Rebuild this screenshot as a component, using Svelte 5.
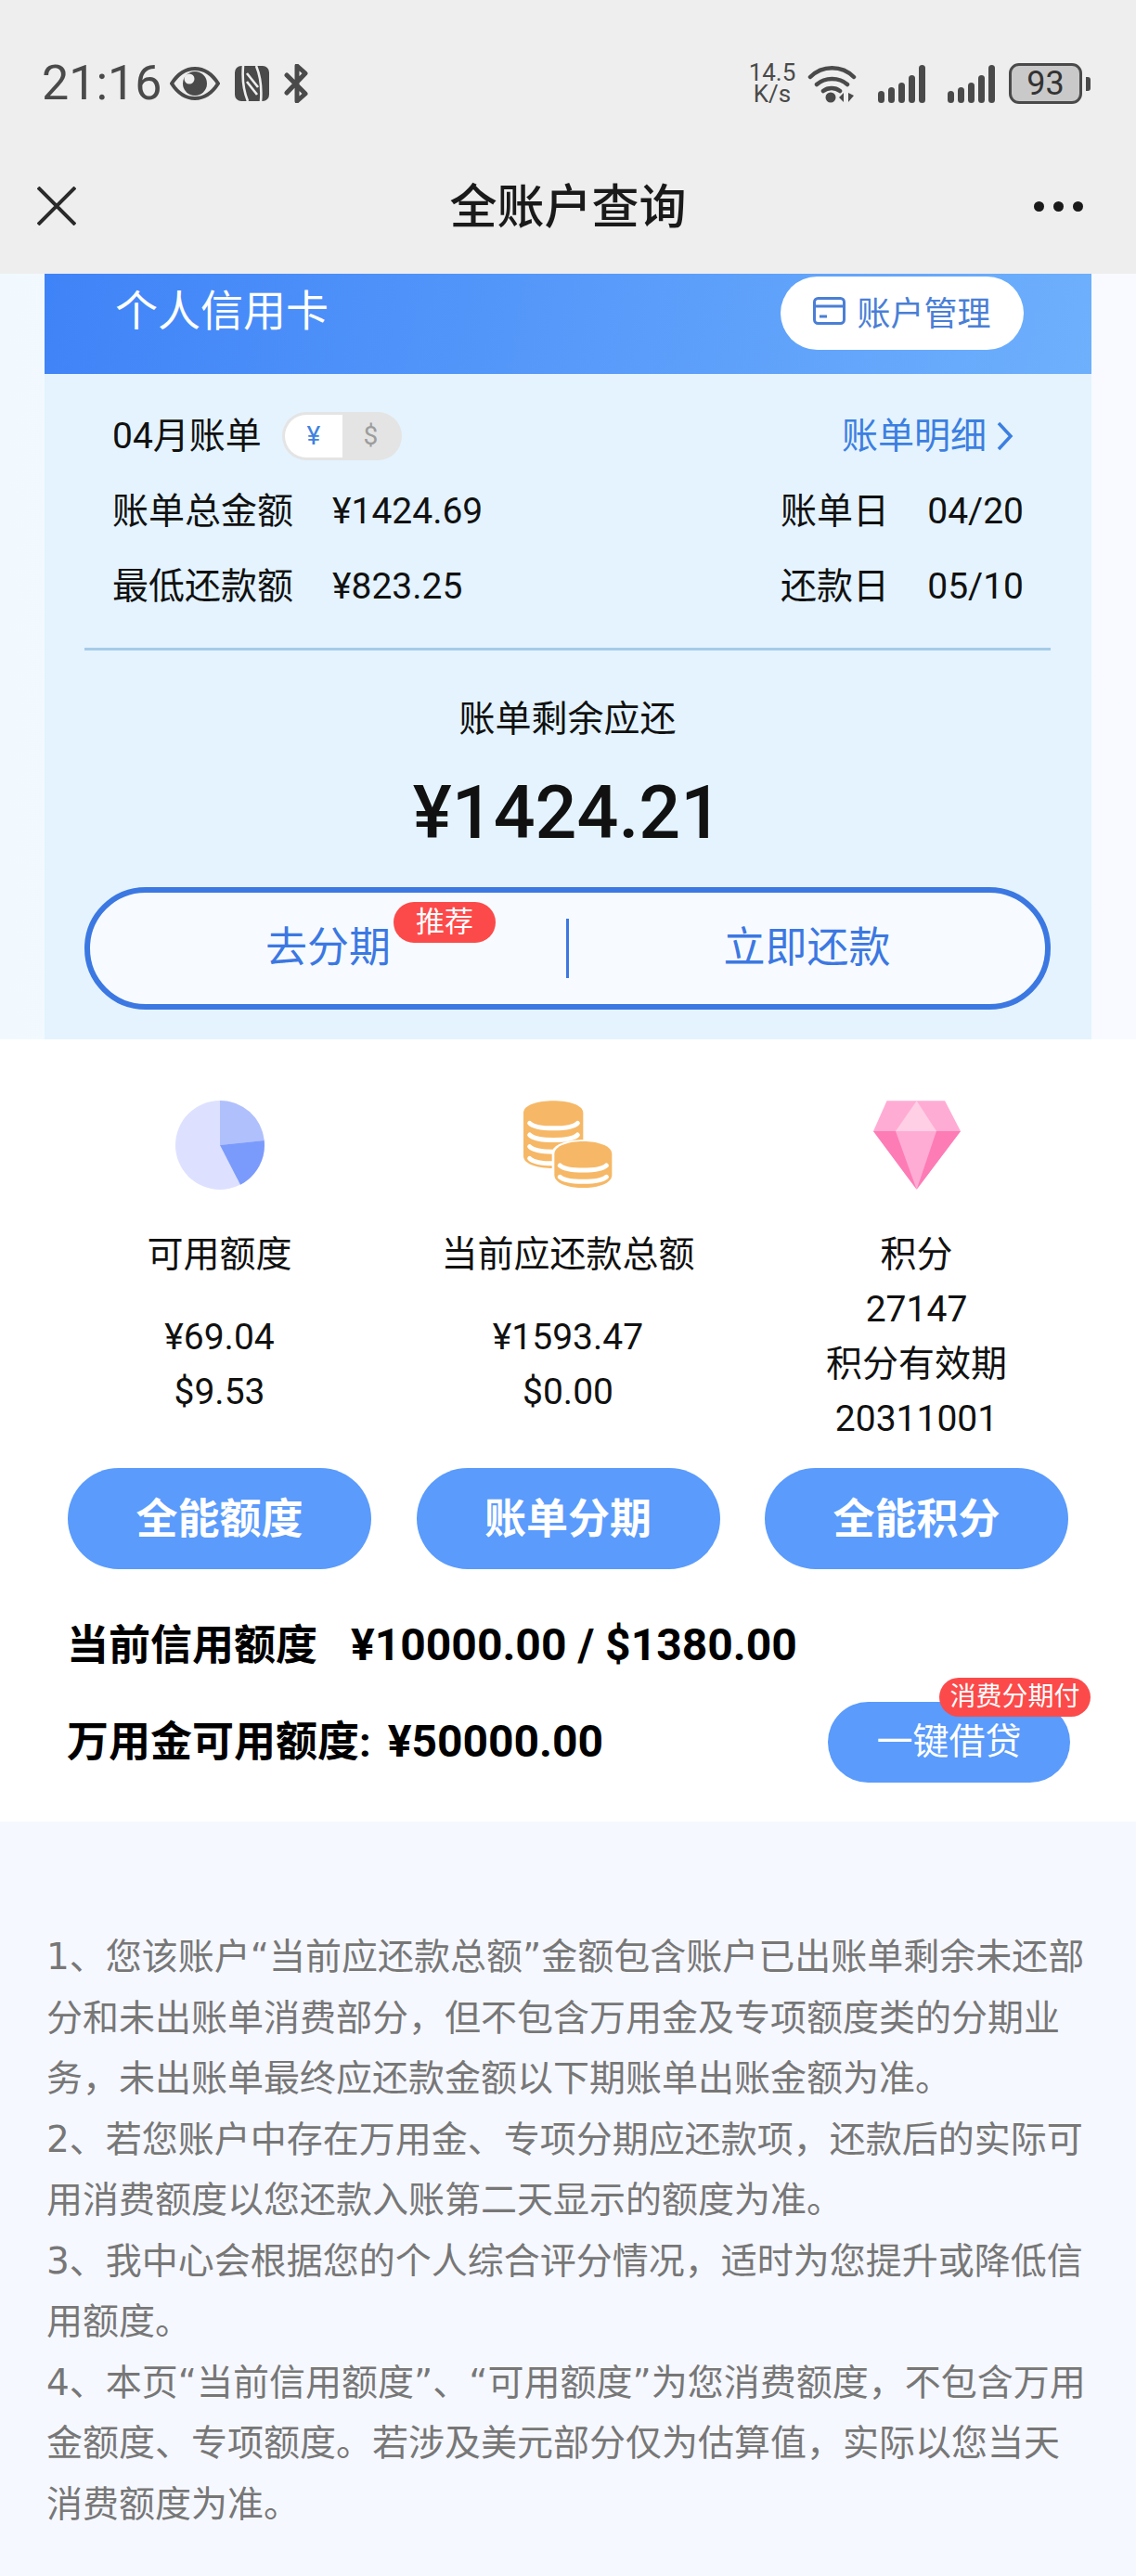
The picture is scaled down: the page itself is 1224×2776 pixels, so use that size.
<script>
  const stats = [
    { label: '可用额度', lines: ['¥69.04', '$9.53'], icon: 'pie', action: '全能额度' },
    { label: '当前应还款总额', lines: ['¥1593.47', '$0.00'], icon: 'coins', action: '账单分期' },
    { label: '积分', lines: ['27147', '积分有效期', '20311001'], icon: 'gem', action: '全能积分' }
  ];

  const notes = [
    '1、您该账户“当前应还款总额”金额包含账户已出账单剩余未还部分和未出账单消费部分，但不包含万用金及专项额度类的分期业务，未出账单最终应还款金额以下期账单出账金额为准。',
    '2、若您账户中存在万用金、专项分期应还款项，还款后的实际可用消费额度以您还款入账第二天显示的额度为准。',
    '3、我中心会根据您的个人综合评分情况，适时为您提升或降低信用额度。',
    '4、本页“当前信用额度”、“可用额度”为您消费额度，不包含万用金额度、专项额度。若涉及美元部分仅为估算值，实际以您当天消费额度为准。'
  ];
</script>

<div class="page">
  <header class="top">
    <div class="status">
      <div class="status-left">
        <span class="time">21:16</span>
        <svg class="eye" viewBox="0 0 54 36" width="54" height="36">
          <path d="M2 18C9 7 18 2 27 2s18 5 25 16c-7 11-16 16-25 16S9 29 2 18Z" fill="none" stroke="#4a4a4a" stroke-width="4" />
          <circle cx="27" cy="18" r="13" fill="#4a4a4a" />
          <circle cx="21" cy="13" r="5.5" fill="#eee" />
        </svg>
        <svg class="nfc" viewBox="0 0 37 38" width="37" height="38">
          <rect width="37" height="38" rx="7" fill="#4a4a4a" />
          <path d="M9 0c-1 12 0 26 5 38M28 38c1-12 0-26-5-38M13 8l12 15M13 17l11 14" fill="none" stroke="#eee" stroke-width="2.6" />
        </svg>
        <svg class="bt" viewBox="0 0 26 42" width="26" height="42">
          <path d="M3 12l20 20-9 8V2l9 8L3 31" fill="none" stroke="#4a4a4a" stroke-width="5" stroke-linejoin="round" stroke-linecap="round" />
        </svg>
      </div>
      <div class="status-right">
        <div class="speed"><span>14.5</span><span>K/s</span></div>
        <svg viewBox="0 0 53 42" width="53" height="42">
          <path d="M3 14C16 1 37 1 50 14M10 22c9-8 24-8 33 0M17 29c5-4 13-4 18 0" fill="none" stroke="#4a4a4a" stroke-width="4.5" stroke-linecap="round" />
          <circle cx="25" cy="36" r="5.5" fill="#4a4a4a" />
          <path d="M39 31v10l-5-5ZM44 31v10l6-7Z" fill="#4a4a4a" />
        </svg>
        <svg class="signal" viewBox="0 0 52 41" width="52" height="41">
          <rect x="0" y="28" width="7" height="13" rx="3.5" />
          <rect x="11" y="24" width="7" height="17" rx="3.5" />
          <rect x="22" y="19" width="7" height="22" rx="3.5" />
          <rect x="33" y="11" width="7" height="30" rx="3.5" />
          <rect x="44" y="0" width="7" height="41" rx="3.5" />
        </svg>
        <svg class="signal" viewBox="0 0 52 41" width="52" height="41">
          <rect x="0" y="28" width="7" height="13" rx="3.5" />
          <rect x="11" y="24" width="7" height="17" rx="3.5" />
          <rect x="22" y="19" width="7" height="22" rx="3.5" />
          <rect x="33" y="11" width="7" height="30" rx="3.5" />
          <rect x="44" y="0" width="7" height="41" rx="3.5" />
        </svg>
        <div class="battery"><span>93</span></div>
        <i class="nub"></i>
      </div>
    </div>
    <div class="nav">
      <svg viewBox="0 0 42 42" width="42" height="42">
        <path d="M1 1l40 40M41 1L1 41" stroke="#2a2a2a" stroke-width="4" fill="none" />
      </svg>
      <h1>全账户查询</h1>
      <div class="dots"><i></i><i></i><i></i></div>
    </div>
  </header>

  <section class="card-wrap">
    <div class="card">
      <div class="card-head">
        <span class="card-title">个人信用卡</span>
        <button class="manage">
          <svg viewBox="0 0 35 30" width="35" height="30">
            <rect x="1.5" y="1.5" width="32" height="27" rx="4" fill="none" stroke="#4a7fd6" stroke-width="3" />
            <path d="M2 10h31M7 21h8" stroke="#4a7fd6" stroke-width="3" />
          </svg>
          账户管理
        </button>
      </div>
      <div class="card-body">
        <div class="row">
          <div class="row-left">
            <span>04月账单</span>
            <div class="toggle"><span class="on">¥</span><span class="off">$</span></div>
          </div>
          <span class="detail">账单明细
            <svg viewBox="0 0 18 32" width="18" height="32">
              <path d="M2 2l13 14L2 30" fill="none" stroke="#3c7fe0" stroke-width="3.5" />
            </svg>
          </span>
        </div>
        <div class="row">
          <div class="row-left"><span class="key">账单总金额</span><span>¥1424.69</span></div>
          <div class="row-right"><span>账单日</span><span>04/20</span></div>
        </div>
        <div class="row">
          <div class="row-left"><span class="key">最低还款额</span><span>¥823.25</span></div>
          <div class="row-right"><span>还款日</span><span>05/10</span></div>
        </div>
        <div class="rule"></div>
        <div class="remain">账单剩余应还</div>
        <div class="amount">¥1424.21</div>
        <div class="pill">
          <div class="pill-side">去分期</div>
          <span class="tag">推荐</span>
          <i class="pill-sep"></i>
          <div class="pill-side">立即还款</div>
        </div>
      </div>
    </div>
  </section>

  <section class="summary">
    <div class="stats">
      {#each stats as s}
        <div class="stat">
          <div class="stat-icon">
            {#if s.icon === 'pie'}
              <svg viewBox="0 0 96 96" width="96" height="96">
                <circle cx="48" cy="48" r="48" fill="#dde1ff" />
                <path d="M48 48V0a48 48 0 0 1 47.7 43Z" fill="#b0c0fd" />
                <path d="M48 48l47.7-5A48 48 0 0 1 70 90.7Z" fill="#7b9bfc" />
              </svg>
            {:else if s.icon === 'coins'}
              <svg viewBox="42 35 288 288" width="96" height="96">
                <path d="M42 75c0-52 193-52 193 0v140c0 52-193 52-193 0Z" fill="#f6b866" />
                <path d="M62 108c20 22 135 22 155 0M62 146c20 22 135 22 155 0M62 184c20 22 135 22 155 0M62 222c20 22 135 22 155 0" fill="none" stroke="#fff" stroke-width="15" stroke-linecap="round" />
                <path d="M134 205c0-58 202-58 202 0v70c0 58-202 58-202 0Z" fill="#fff" />
                <path d="M142 208c0-55 186-55 186 0v68c0 55-186 55-186 0Z" fill="#f6b866" />
                <path d="M160 245c20 20 130 20 150 0M160 282c20 20 130 20 150 0" fill="none" stroke="#fff" stroke-width="15" stroke-linecap="round" />
              </svg>
            {:else}
              <svg viewBox="47 35 278 283" width="94" height="96">
                <path d="M90 35h185l50 97-140 186L47 132Z" fill="#ffacd4" />
                <path d="M185 35l-67 97h130Z" fill="#ffcfe6" />
                <path d="M47 132h71l67 186ZM325 132h-77l-63 186Z" fill="#fd7cb6" />
              </svg>
            {/if}
          </div>
          <div class="stat-line label">{s.label}</div>
          <div class="stat-values" class:tight={s.lines.length === 3}>
            {#each s.lines as line}
              <div class="stat-line">{line}</div>
            {/each}
          </div>
        </div>
      {/each}
      {#each stats as s}
        <button class="action">{s.action}</button>
      {/each}
    </div>

    <div class="credit">
      <span>当前信用额度</span>
      <span class="money">¥10000.00 / $1380.00</span>
    </div>
    <div class="loan">
      <div class="loan-text"><span>万用金可用额度:</span><span class="money">¥50000.00</span></div>
      <button class="borrow">一键借贷<span class="borrow-tag">消费分期付</span></button>
    </div>
  </section>

  <section class="notes">
    {#each notes as note}
      <p>{note}</p>
    {/each}
  </section>
</div>

<style>
  :global(body) {
    margin: 0;
    background: #f6f8ff;
  }

  .page {
    width: 1224px;
    height: 2776px;
    overflow: hidden;
    font-family: Roboto, "Noto Sans CJK SC", sans-serif;
    color: #111;
  }

  button {
    border: none;
    font-family: inherit;
    padding: 0;
  }

  .top {
    height: 295px;
    background: #eee;
  }

  .status {
    height: 180px;
    padding: 0 49px 0 45px;
    display: flex;
    justify-content: space-between;
    align-items: center;
    box-sizing: border-box;
  }

  .status-left,
  .status-right {
    display: flex;
    align-items: center;
  }

  .time {
    font-size: 52px;
    line-height: 60px;
    color: #4a4a4a;
    width: 138px;
  }

  .nfc {
    margin-left: 16px;
  }

  .bt {
    margin-left: 16px;
  }

  .speed {
    display: flex;
    flex-direction: column;
    align-items: center;
    width: 52px;
    margin-right: 12px;
    font-size: 26px;
    line-height: 23px;
    color: #4a4a4a;
  }

  .signal {
    margin-left: 23px;
    fill: #4a4a4a;
  }

  .battery {
    margin-left: 14px;
    width: 79px;
    height: 44px;
    box-sizing: border-box;
    border: 3px solid #4a4a4a;
    border-radius: 11px;
    background: #c9c9c9;
    display: flex;
    align-items: center;
    justify-content: center;
    font-size: 36px;
    color: #333;
  }

  .nub {
    width: 5px;
    height: 15px;
    margin-left: 4px;
    background: #4a4a4a;
    border-radius: 0 3px 3px 0;
  }

  .nav {
    height: 84px;
    padding: 0 40px;
    display: grid;
    grid-template-columns: 1fr auto 1fr;
    align-items: center;
  }

  .nav h1 {
    margin: 0 0 6px;
    font-size: 51px;
    font-weight: 500;
    color: #1a1a1a;
  }

  .dots {
    display: flex;
    gap: 10px;
    justify-content: flex-end;
    padding-right: 17px;
  }

  .dots i {
    width: 11px;
    height: 11px;
    border-radius: 50%;
    background: #1a1a1a;
  }

  .card-wrap {
    padding: 0 48px;
    background: linear-gradient(90deg, #f1f9ff, #f8faff);
  }

  .card-head {
    height: 108px;
    padding: 3px 73px 0 76px;
    box-sizing: border-box;
    display: flex;
    align-items: flex-start;
    justify-content: space-between;
    background: linear-gradient(100deg, #3f83f8, #6eb0fc);
  }

  .card-title {
    font-size: 46px;
    line-height: 74px;
    color: #fff;
  }

  .manage {
    width: 262px;
    height: 79px;
    padding-bottom: 6px;
    border-radius: 40px;
    background: #fff;
    color: #4a7fd6;
    font-size: 36px;
    display: flex;
    align-items: center;
    justify-content: center;
    gap: 12px;
  }

  .card-body {
    height: 717px;
    box-sizing: border-box;
    padding: 25px 44px 0 43px;
    background: #e4f3fe;
  }

  .row {
    height: 81px;
    box-sizing: border-box;
    padding: 2px 29px 0 30px;
    display: flex;
    align-items: center;
    justify-content: space-between;
    font-size: 39px;
    line-height: 56px;
  }

  .row-left {
    display: flex;
    align-items: center;
  }

  .row:not(:first-child) .row-left {
    align-items: baseline;
  }

  .key {
    width: 237px;
  }

  .row-right {
    display: flex;
    width: 262px;
    justify-content: space-between;
    align-items: baseline;
  }

  .toggle {
    margin-left: 22px;
    width: 129px;
    height: 52px;
    box-sizing: border-box;
    padding: 3px;
    border-radius: 26px;
    background: #e4e4e4;
    display: flex;
    font-size: 28px;
    line-height: 46px;
    text-align: center;
  }

  .on {
    width: 62px;
    background: #fff;
    color: #3f83e0;
    border-radius: 23px 0 0 23px;
  }

  .off {
    flex: 1;
    color: #9c9c9c;
  }

  .detail {
    display: flex;
    align-items: center;
    gap: 11px;
    color: #3c7fe0;
    margin-right: 11px;
  }

  .rule {
    height: 3px;
    margin-top: 27px;
    background: #a6cbe8;
  }

  .remain {
    margin-top: 44px;
    text-align: center;
    font-size: 39px;
    line-height: 60px;
  }

  .amount {
    margin-top: 21px;
    text-align: center;
    font-size: 79px;
    line-height: 100px;
    font-weight: 500;
  }

  .pill {
    position: relative;
    margin-top: 30px;
    height: 132px;
    box-sizing: border-box;
    border: 6px solid #3c78e2;
    border-radius: 66px;
    background: #f7fbff;
    display: flex;
    align-items: center;
    color: #3c78e2;
    font-size: 45px;
  }

  .pill-side {
    flex: 1;
    text-align: center;
    padding-bottom: 9px;
  }

  .pill-sep {
    width: 3px;
    height: 64px;
    background: #3c78e2;
  }

  .tag {
    position: absolute;
    left: 327px;
    top: 10px;
    width: 110px;
    height: 44px;
    border-radius: 22px;
    background: #fc4a4a;
    color: #fff;
    font-size: 31px;
    line-height: 44px;
    text-align: center;
  }

  .summary {
    height: 843px;
    box-sizing: border-box;
    background: #fff;
    padding-top: 66px;
  }

  .stats {
    display: grid;
    grid-template-columns: repeat(3, 327px);
    column-gap: 48.5px;
    padding: 0 73px;
    text-align: center;
  }

  .stat {
    height: 396px;
  }

  .stat-icon {
    height: 96px;
    margin-bottom: 41px;
  }

  .stat-icon svg {
    display: block;
    margin: 0 auto;
  }

  .stat-line {
    font-size: 39px;
    line-height: 59px;
    white-space: nowrap;
  }

  .stat-values {
    margin-top: 30px;
  }

  .stat-values.tight {
    margin-top: 0;
  }

  .action {
    height: 109px;
    padding-bottom: 7px;
    border-radius: 55px;
    background: #5a9bfc;
    color: #fff;
    font-size: 45px;
    font-weight: 700;
  }

  .credit {
    margin-top: 52px;
    padding-left: 72px;
    display: flex;
    align-items: baseline;
    gap: 36px;
    font-size: 45px;
    line-height: 60px;
    font-weight: 700;
    color: #000;
  }

  .money {
    font-size: 48px;
  }

  .loan {
    margin-top: 30px;
    padding: 0 71px 0 72px;
    height: 87px;
    display: flex;
    align-items: center;
    justify-content: space-between;
  }

  .loan-text {
    display: flex;
    align-items: baseline;
    gap: 18px;
    margin-bottom: 8px;
    font-size: 45px;
    font-weight: 700;
    color: #000;
  }

  .borrow {
    position: relative;
    width: 261px;
    height: 87px;
    border-radius: 44px;
    background: #5a9bfc;
    color: #fff;
    font-size: 39px;
    line-height: 85px;
  }

  .borrow-tag {
    position: absolute;
    left: 120px;
    top: -26px;
    width: 163px;
    height: 42px;
    border-radius: 21px;
    background: #fc4a4a;
    font-size: 28px;
    line-height: 42px;
    text-align: center;
  }

  .notes {
    padding: 113px 50px 0;
    background: #f6f8ff;
    font-family: "DejaVu Sans", "Noto Sans CJK SC", sans-serif;
  }

  .notes p {
    margin: 0;
    font-size: 39px;
    line-height: 65.5px;
    color: #777;
  }
</style>
